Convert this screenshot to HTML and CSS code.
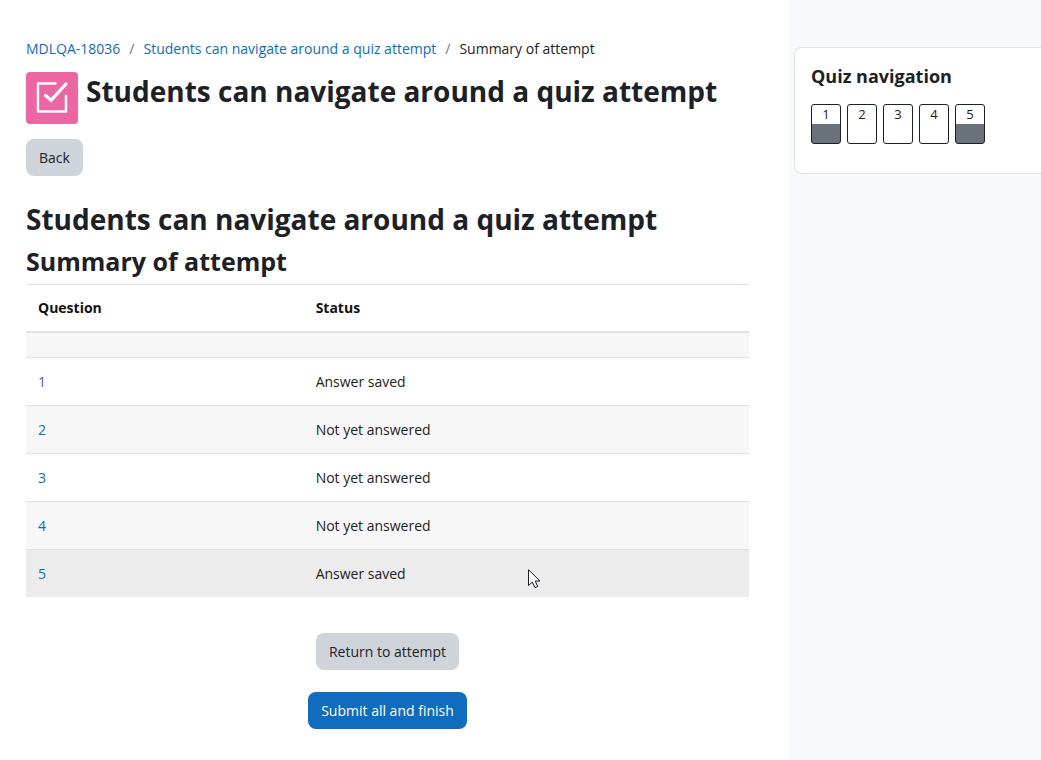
FILE: index.html
```html
<!DOCTYPE html>
<html lang="en">
<head>
<meta charset="utf-8">
<title>Summary of attempt</title>
<link rel="stylesheet" href="styles.css">
</head>
<body>
<div class="page">
  <main class="main">
    <nav class="breadcrumb" aria-label="Breadcrumb">
      <a href="#">MDLQA-18036</a>
      <span class="separator">/</span>
      <a href="#">Students can navigate around a quiz attempt</a>
      <span class="separator">/</span>
      <span>Summary of attempt</span>
    </nav>
    <header class="activity-header">
      <span class="activity-icon">
        <svg viewBox="0 0 52 52" width="52" height="52" fill="none" stroke="#fff" stroke-width="2.4" stroke-linecap="round" stroke-linejoin="round" aria-hidden="true">
          <path d="M29.5 11.5H12V39.500H40V24"/>
          <path d="M19.5 23.5L25.2 28.2L40 12" stroke-width="3.2" stroke-linejoin="miter"/>
        </svg>
      </span>
      <h1 class="title">Students can navigate around a quiz attempt</h1>
    </header>
    <button class="button button-secondary" type="button">Back</button>
    <h2 class="title quiz-title">Students can navigate around a quiz attempt</h2>
    <h3 class="subtitle">Summary of attempt</h3>
    <table class="summary">
      <thead>
        <tr><th class="question-column" scope="col">Question</th><th scope="col">Status</th></tr>
      </thead>
      <tbody>
        <tr><td colspan="2"></td></tr>
        <tr><td><a class="visited" href="#">1</a></td><td>Answer saved</td></tr>
        <tr><td><a href="#">2</a></td><td>Not yet answered</td></tr>
        <tr><td><a href="#">3</a></td><td>Not yet answered</td></tr>
        <tr><td><a href="#">4</a></td><td>Not yet answered</td></tr>
        <tr class="hovered"><td><a href="#">5</a></td><td>Answer saved</td></tr>
      </tbody>
    </table>
    <div class="actions">
      <button class="button button-secondary" type="button">Return to attempt</button>
      <button class="button button-primary" type="button">Submit all and finish</button>
    </div>
  </main>
  <aside class="drawer">
    <section class="block">
      <h2 class="block-title">Quiz navigation</h2>
      <nav class="questions" aria-label="Quiz navigation">
        <a class="question answered" href="#">1</a>
        <a class="question" href="#">2</a>
        <a class="question" href="#">3</a>
        <a class="question" href="#">4</a>
        <a class="question answered" href="#">5</a>
      </nav>
    </section>
  </aside>
</div>
<svg class="pointer" viewBox="0 0 13 20" width="13" height="20" aria-hidden="true">
  <path d="M.5.8V16.500L4.300 13L7 18.700L9.700 17.500L7.200 12H12z" fill="#fff" stroke="#1b1b2b"/>
</svg>
</body>
</html>
```
FILE: styles.css
```css
* {
  box-sizing: border-box;
}

body {
  margin: 0;
  background: #fff;
  color: #1d2125;
  font-family: "Segoe UI", "Open Sans", "Noto Sans", sans-serif;
  font-size: 14px;
  line-height: 23px;
}

a {
  color: #0f6cbf;
  text-decoration: none;
}

h1,
h2,
h3 {
  margin: 0;
}

.page {
  display: flex;
  min-height: 100vh;
}

.main {
  flex: 1;
  min-width: 0;
  padding: 37px 39px 31px 26px;
}

.breadcrumb {
  display: flex;
  flex-wrap: wrap;
  gap: 9px;
}

.separator {
  color: #6a737b;
}

.activity-header {
  display: flex;
  gap: 8px;
  margin: 12px 0 15px;
}

.activity-icon {
  flex: none;
  height: 52px;
  border-radius: 4px;
  background: #eb66a2;
}

.title {
  font-size: 28px;
  line-height: 36px;
}

.activity-header .title {
  padding-top: 1px;
}

.button {
  display: block;
  padding: 7px 13px;
  border: 0;
  border-radius: 8px;
  font: inherit;
}

.button-secondary {
  background: #ced4da;
  color: #1d2125;
}

.button-primary {
  background: #0f6cbf;
  color: #fff;
}

.quiz-title {
  margin-top: 25px;
}

.subtitle {
  margin: 8px 0 7px;
  font-size: 25px;
  line-height: 32px;
}

.summary {
  width: 100%;
  border-spacing: 0;
  border-collapse: collapse;
  table-layout: fixed;
}

.summary th,
.summary td {
  padding: 12px;
  border-top: 1px solid #dee2e6;
  text-align: left;
}

.summary th {
  border-bottom: 2px solid #dee2e6;
  color: #111;
  line-height: 22px;
}

.question-column {
  width: 38.4%;
}

.summary tbody tr:nth-child(odd) {
  background: #f7f7f7;
}

.summary tbody .hovered {
  background: #ececec;
}

.visited {
  color: #5a54b8;
}

.actions {
  display: flex;
  flex-direction: column;
  align-items: center;
  gap: 22px;
  margin-top: 36px;
}

.drawer {
  flex: none;
  width: 253px;
  padding: 47px 0 0 6px;
  background: #f8f9fa;
}

.block {
  padding: 16px 16px 29px;
  border: 1px solid #dee2e6;
  border-right: 0;
  border-radius: 8px 0 0 8px;
  background: #fff;
}

.block-title {
  font-size: 18px;
  line-height: 24px;
}

.questions {
  display: flex;
  gap: 6px;
  margin-top: 16px;
}

.question {
  width: 30px;
  height: 40px;
  border: 1px solid #1d2125;
  border-radius: 3px;
  color: #1d2125;
  font-size: 13px;
  line-height: 18px;
  text-align: center;
}

.answered {
  background: linear-gradient(#fff 50%, #6a737b 50%);
}

.pointer {
  position: absolute;
  top: 569px;
  left: 528px;
}
```
